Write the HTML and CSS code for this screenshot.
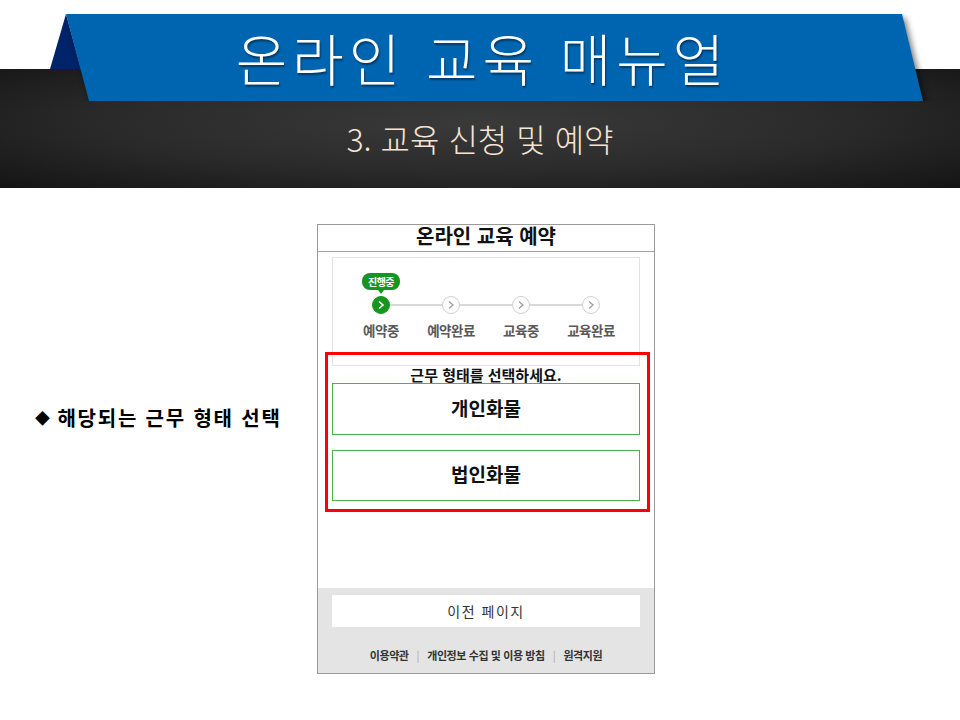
FILE: index.html
```html
<!DOCTYPE html>
<html lang="ko">
<head>
  <meta charset="UTF-8">
  <meta name="viewport" content="width=device-width, initial-scale=1.0">
  <title>온라인 교육 매뉴얼</title>
  <link rel="stylesheet" href="styles.css">
</head>
<body>
  <header class="top">
    <div class="banner">
      <!-- 파란 띠 배경 -->
      <svg class="banner_bg" width="960" height="87" viewBox="0 0 960 87">
        <polygon points="66,0 50,55 81,55" fill="#00236a"/>
        <polygon class="banner_blue" points="66,0 902,0 923,87 89,87" fill="#0065b1"/>
      </svg>
      <h1 class="title">온라인 교육 매뉴얼</h1>
    </div>
    <p class="sub_title">3. 교육 신청 및 예약</p>
  </header>

  <main class="content">
    <p class="guide"><span class="dia">◆</span> 해당되는 근무 형태 선택</p>

    <div class="phone">
      <h2 class="phone_title">온라인 교육 예약</h2>

      <div class="step_box">
        <ul class="steps">
          <li class="step on">
            <div class="badge_slot"><span class="badge">진행중</span></div>
            <span class="circle">
              <svg width="18" height="18" viewBox="0 0 18 18"><polyline points="7,5.5 11,9 7,12.5" fill="none" stroke="#fff" stroke-width="1.6"/></svg>
            </span>
            <span class="step_name">예약중</span>
          </li>
          <li class="step">
            <div class="badge_slot"></div>
            <span class="circle">
              <svg width="18" height="18" viewBox="0 0 18 18"><polyline points="7,5.5 11,9 7,12.5" fill="none" stroke="#9a9a9a" stroke-width="1.2"/></svg>
            </span>
            <span class="step_name">예약완료</span>
          </li>
          <li class="step">
            <div class="badge_slot"></div>
            <span class="circle">
              <svg width="18" height="18" viewBox="0 0 18 18"><polyline points="7,5.5 11,9 7,12.5" fill="none" stroke="#9a9a9a" stroke-width="1.2"/></svg>
            </span>
            <span class="step_name">교육중</span>
          </li>
          <li class="step">
            <div class="badge_slot"></div>
            <span class="circle">
              <svg width="18" height="18" viewBox="0 0 18 18"><polyline points="7,5.5 11,9 7,12.5" fill="none" stroke="#9a9a9a" stroke-width="1.2"/></svg>
            </span>
            <span class="step_name">교육완료</span>
          </li>
        </ul>
      </div>

      <p class="select_txt">근무 형태를 선택하세요.</p>
      <button class="type_btn first">개인화물</button>
      <button class="type_btn">법인화물</button>

      <div class="phone_bottom">
        <button class="back_btn">이전 페이지</button>
        <p class="links">
          <span>이용약관</span><i>|</i><span>개인정보 수집 및 이용 방침</span><i>|</i><span>원격지원</span>
        </p>
      </div>

      <!-- 강조 표시 -->
      <div class="mark"></div>
    </div>
  </main>
</body>
</html>
```

FILE: styles.css
```css
* {margin: 0; padding: 0; list-style: none; box-sizing: border-box;}
body {font-family: "Noto Sans CJK KR", "Noto Sans", sans-serif; background-color: #fff; width: 960px; height: 720px; overflow: hidden;}

/* 상단 */
.top {
  height: 188px;
  background:
    linear-gradient(#fff, #fff) 0 0 / 100% 69px no-repeat,
    radial-gradient(ellipse at 50% 45%, #3a3a3a 0%, #2a2a2a 55%, #141414 100%) 0 69px / 100% 119px no-repeat;
}
.banner {position: relative; height: 101px; padding-top: 14px;}
.banner_bg {position: absolute; left: 0; top: 14px;}
.banner_blue {filter: drop-shadow(3px 4px 3px rgba(0,0,0,.55));}
.title {
  position: relative;
  height: 87px;
  line-height: 85px;
  padding-left: 5px;
  text-align: center;
  color: #fff;
  font-size: 56px;
  font-weight: 300;
  letter-spacing: 5px;
  text-shadow: 1px 2px 2px rgba(0,0,0,.45);
}
.sub_title {margin-top: 17px; line-height: 40px; text-align: center; color: #f6e4d4; font-size: 32px; font-weight: 300;}

/* 본문 */
.content {display: flex; align-items: flex-start; padding: 36px 0 0 35px;}
.guide {width: 282px; margin-top: 181px; font-size: 20px; line-height: 26px; font-weight: 700; color: #000; letter-spacing: 1.8px; white-space: nowrap;}
.guide .dia {font-size: 15px; letter-spacing: 0; vertical-align: 2px;}

.phone {
  position: relative;
  display: flex;
  flex-direction: column;
  width: 338px;
  height: 450px;
  border: 1px solid #9b9b9b;
  background-color: #fff;
}
.phone_title {
  font-size: 20px;
  font-weight: 700;
  line-height: 22px;
  padding-bottom: 4px;
  text-align: center;
  color: #111;
  border-bottom: 1px solid #a3a3a3;
}

.step_box {height: 109px; margin: 5px 14px 0; border: 1px solid #e3e3e3;}
.steps {display: flex; justify-content: center; padding-top: 15px;}
.step {position: relative; width: 70px; display: flex; flex-direction: column; align-items: center;}
.step:not(:last-child)::after {
  content: '';
  position: absolute;
  top: 31px;
  left: calc(50% + 9px);
  width: calc(100% - 18px);
  height: 2px;
  background-color: #d8d8d8;
}
.badge_slot {height: 20px;}
.badge {
  position: relative;
  display: block;
  width: 38px;
  height: 17px;
  line-height: 17px;
  border-radius: 8px;
  background-color: #17961f;
  color: #fff;
  font-size: 10px;
  font-weight: 700;
  text-align: center;
  letter-spacing: -0.5px;
}
.badge::after {
  content: '';
  position: absolute;
  left: 50%;
  bottom: -4px;
  margin-left: -3px;
  border-left: 3px solid transparent;
  border-right: 3px solid transparent;
  border-top: 4px solid #17961f;
}
.circle {
  display: flex;
  width: 18px;
  height: 18px;
  margin-top: 3px;
  border-radius: 50%;
  border: 1px solid #cfcfcf;
  background-color: #fff;
  align-items: center;
  justify-content: center;
}
.circle svg {flex: none;}
.step.on .circle {border-color: #17961f; background-color: #17961f;}
.step_name {margin-top: 7px; line-height: 18px; font-size: 13.5px; font-weight: 700; color: #595959; letter-spacing: -0.5px; white-space: nowrap;}

.select_txt {position: relative; z-index: 1; margin-top: 1px; line-height: 16px; font-size: 15px; font-weight: 700; color: #111; text-align: center;}
.type_btn {
  display: block;
  height: 52px;
  margin: 15px 14px 0;
  padding-bottom: 4px;
  border: 1px solid #4db24d;
  background-color: #fff;
  font-family: inherit;
  font-size: 19px;
  font-weight: 700;
  color: #111;
  cursor: pointer;
}
.type_btn.first {margin-top: 0;}
.type_btn:not(.first) {height: 51px;}

.phone_bottom {margin-top: auto; height: 85px; padding: 7px 14px 0; background-color: #e4e4e4;}
.back_btn {
  display: block;
  width: 100%;
  height: 32px;
  border: none;
  background-color: #fff;
  font-family: inherit;
  font-size: 14px;
  color: #333;
  letter-spacing: 1.5px;
}
.links {margin-top: 20px; line-height: 16px; font-size: 11px; font-weight: 700; color: #333; text-align: center; letter-spacing: -0.4px;}
.links i {font-style: normal; font-weight: 400; color: #aaa; margin: 0 8px;}

.mark {
  position: absolute;
  left: 7px;
  top: 127px;
  width: 325px;
  height: 160px;
  border: 3px solid #ff0000;
  pointer-events: none;
}
```
